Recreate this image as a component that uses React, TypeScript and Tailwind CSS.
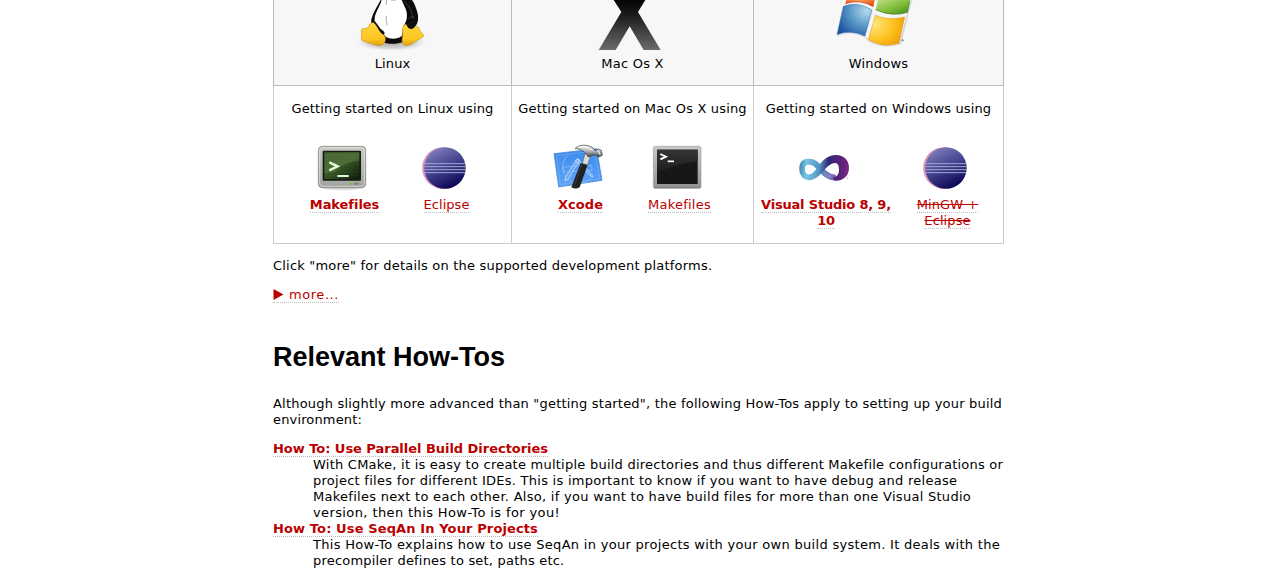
import type { ReactNode } from "react";

function Link({ children, className = "" }: { children: ReactNode; className?: string }) {
  return <a className={`border-b border-dotted border-[#bbb] text-[#b00] ${className}`}>{children}</a>;
}

function Tux() {
  return (
    <svg className="block h-[52px] w-[111px]" viewBox="-9 0 333 156">
      <defs>
        <linearGradient id="foot" x1="0" y1="0" x2="0" y2="1">
          <stop offset="0" stopColor="#ffd53a" />
          <stop offset="0.7" stopColor="#fcc624" />
          <stop offset="1" stopColor="#e0a010" />
        </linearGradient>
        <radialGradient id="footShade">
          <stop offset="0" stopColor="#777" stopOpacity="0.7" />
          <stop offset="0.7" stopColor="#999" stopOpacity="0.35" />
          <stop offset="1" stopColor="#bbb" stopOpacity="0" />
        </radialGradient>
      </defs>
      <ellipse cx="155" cy="127" rx="104" ry="26" fill="url(#footShade)" />
      <path d="M122 0C113 18 99 37 94 58C91 78 103 99 124 126C145 133 171 133 189 126L220 82C236 76 238 50 229 27C224 13 220 5 216 0Z" fill="#0b0b0b" />
      <path d="M125 0C122 14 112 28 106 44C101 61 105 77 116 88C130 96 132 106 139 112C153 119 175 117 185 108C190 99 186 81 194 72C203 56 203 36 194 20L185 0Z" fill="#fff" />
      <path d="M139 0V15M153 0Q160 1 168 0M139 47Q136 60 142 76" fill="none" stroke="#aaa" strokeWidth="3" />
      <path d="M192 4Q215 22 219 56M207 57Q216 45 223 53" fill="none" stroke="#555" strokeWidth="2" />
      <path d="M94 69C104 65 111 75 119 87C125 97 139 108 136 121C134 135 120 140 108 136C92 130 77 127 66 121C61 116 67 105 64 96C62 87 67 86 79 85C88 83 86 72 94 69Z" fill="url(#foot)" stroke="#b88512" strokeWidth="1.5" />
      <path d="M103 70C111 77 121 103 131 104C138 99 131 93 122 87L105 64Z" fill="#0b0b0b" />
      <path d="M193 74C202 69 201 86 213 86C225 88 225 73 233 80C239 86 239 94 248 102C255 109 247 113 235 119C220 128 207 140 195 136C182 132 187 119 188 103C189 91 185 79 193 74Z" fill="url(#foot)" stroke="#b88512" strokeWidth="1.5" />
      <path d="M201 75C205 65 218 63 226 72C227 84 214 91 204 83Z" fill="#111" />
    </svg>
  );
}

function MacX() {
  return (
    <svg className="block h-[52px] w-[111px]" viewBox="-9 0 333 156">
      <defs>
        <linearGradient id="macx" x1="0" y1="0" x2="0" y2="150" gradientUnits="userSpaceOnUse">
          <stop offset="0" stopColor="#050505" />
          <stop offset="0.3" stopColor="#1b1b1b" />
          <stop offset="1" stopColor="#6b6b6b" />
        </linearGradient>
      </defs>
      <path d="M101 0H196L174 36L242 150H191L149 79L107 150H56L124 36Z" fill="url(#macx)" />
    </svg>
  );
}

function WindowsFlag() {
  return (
    <svg className="block h-[52px] w-[111px]" viewBox="-6 0 333 156">
      <defs>
        <radialGradient id="wr" cx="0.5" cy="0" r="0.8">
          <stop offset="0" stopColor="#f8a55a" />
          <stop offset="1" stopColor="#e5490f" />
        </radialGradient>
        <linearGradient id="wg" x1="0" y1="0" x2="1" y2="1">
          <stop offset="0" stopColor="#c2e08b" />
          <stop offset="0.55" stopColor="#7dbb36" />
          <stop offset="1" stopColor="#3c8b18" />
        </linearGradient>
        <radialGradient id="wb" cx="0.85" cy="0.2" r="0.95">
          <stop offset="0" stopColor="#b5d9ec" />
          <stop offset="0.5" stopColor="#5b9aca" />
          <stop offset="1" stopColor="#1d559f" />
        </radialGradient>
        <radialGradient id="wy" cx="0.15" cy="0.3" r="0.95">
          <stop offset="0" stopColor="#ffe680" />
          <stop offset="0.55" stopColor="#fdc421" />
          <stop offset="1" stopColor="#ef9a08" />
        </radialGradient>
      </defs>
      <path d="M68 0H262L249 48L228 133Q180 149 132 125L120 113Q78 91 37 110Z" fill="#d3d4d6" />
      <path d="M63 0H258L245 46L223 131Q180 144 134 122L118 108Q80 92 36 108Z" fill="#f5f5f5" />
      <path d="M64 0H149L145 20Q105 -4 61 11Z" fill="url(#wr)" />
      <path d="M61 11Q105 -4 145 20" fill="none" stroke="#c5380e" strokeWidth="2" />
      <path d="M158 0H255L247 37Q202 52 152 29Z" fill="url(#wg)" />
      <path d="M152 29Q202 52 247 37L254 4" fill="none" stroke="#39781d" strokeWidth="2" />
      <path d="M55 19Q98 3 141 30L120 108Q78 88 36 104Z" fill="url(#wb)" stroke="#3971a8" strokeWidth="1.5" />
      <path d="M151 46Q190 63 239 51L222 130Q174 145 130 119Z" fill="url(#wy)" stroke="#d7941a" strokeWidth="1.5" />
      <circle cx="233" cy="121" r="3" fill="#777" />
    </svg>
  );
}

function GreenTerminal() {
  return (
    <svg className="mr-[5px] block size-[50px]" viewBox="51 27 150 150">
      <defs>
        <linearGradient id="gt" x1="0" y1="0" x2="1" y2="1">
          <stop offset="0" stopColor="#2b4523" />
          <stop offset="0.5" stopColor="#365426" />
          <stop offset="1" stopColor="#0d1c0b" />
        </linearGradient>
        <linearGradient id="gf" x1="0" y1="0" x2="0" y2="1">
          <stop offset="0" stopColor="#c9cac6" />
          <stop offset="1" stopColor="#a2a49f" />
        </linearGradient>
      </defs>
      <ellipse cx="126" cy="158" rx="58" ry="8" fill="#ddd" />
      <rect x="55" y="34" width="142" height="124" rx="12" fill="url(#gf)" stroke="#858783" strokeWidth="2.5" />
      <rect x="59" y="38" width="134" height="116" rx="9" fill="none" stroke="#e7e8e5" strokeWidth="2" />
      <rect x="68" y="47" width="115" height="90" rx="3" fill="#151d13" />
      <rect x="73" y="52" width="105" height="80" fill="url(#gt)" />
      <path d="M73 52H178V77Q130 80 104 110L73 116Z" fill="#6d8c4a" opacity="0.45" />
      <path d="M73 62H178M73 72H178M73 82H178M73 92H178M73 102H178M73 112H178M73 122H178" stroke="#8da66a" strokeWidth="1.2" opacity="0.15" />
      <path d="M88 82L113 94L88 106" fill="none" stroke="#e4f7df" strokeWidth="7" />
      <path d="M112 123H146" stroke="#dcf8d4" strokeWidth="6" />
      <circle cx="154" cy="146" r="3.5" fill="#66cc22" />
      <path d="M162 146H176" stroke="#83857f" strokeWidth="6" />
    </svg>
  );
}

function Eclipse() {
  return (
    <svg className="mr-[5px] block size-[50px]" viewBox="357 27 150 150">
      <defs>
        <linearGradient id="ec" x1="0.25" y1="0" x2="0.75" y2="1">
          <stop offset="0" stopColor="#8080bd" />
          <stop offset="0.5" stopColor="#403f8c" />
          <stop offset="1" stopColor="#06004d" />
        </linearGradient>
      </defs>
      <circle cx="429" cy="99" r="62.5" fill="#d794bb" />
      <ellipse cx="435" cy="99" rx="62" ry="62.5" fill="url(#ec)" />
      <path d="M375 86H496M374 95H497M374 104H497M375 113H496" stroke="#9fa8d5" strokeWidth="3" />
    </svg>
  );
}

function Xcode() {
  return (
    <svg className="mr-[5px] block size-[50px]" viewBox="39 27 150 150">
      <defs>
        <linearGradient id="xb" x1="0" y1="0" x2="0" y2="1">
          <stop offset="0" stopColor="#3f8ced" />
          <stop offset="1" stopColor="#5da3f8" />
        </linearGradient>
        <linearGradient id="xh" x1="0" y1="0" x2="0" y2="1">
          <stop offset="0" stopColor="#f5f5f5" />
          <stop offset="0.5" stopColor="#b5b7ba" />
          <stop offset="1" stopColor="#3c3e42" />
        </linearGradient>
      </defs>
      <path d="M42 56L170 41L186 136L56 156Z" fill="url(#xb)" stroke="#347bd5" strokeWidth="2" />
      <path d="M49 62L165 48L179 131L61 149Z" fill="none" stroke="#a9cffb" strokeWidth="1.2" strokeDasharray="5 2" />
      <path d="M69 96L154 91L156 106L72 111ZM83 61A43 43 0 0 0 150 132" fill="none" stroke="#a3ccfa" strokeWidth="1.7" />
      <path d="M111 72L119 75L84 133L75 138L76 127ZM112 70L155 118L158 126L149 121L106 76" fill="#6babf5" stroke="#d0e6ff" strokeWidth="2.2" />
      <path d="M122 84L143 89L119 157Q107 164 94 157Z" fill="#202124" />
      <path d="M126 87L102 155" stroke="#555" strokeWidth="1.5" />
      <path d="M127 85L135 56L153 58L143 90Z" fill="#dadbdd" stroke="#4b4c4f" strokeWidth="1.5" />
      <path d="M105 41C117 27 142 28 160 39L165 47L175 42L184 46L187 61L176 66L166 60L157 61L145 66L137 55C127 44 115 41 105 41Z" fill="url(#xh)" stroke="#38393b" strokeWidth="2" />
      <path d="M116 36Q141 32 157 46M174 47L181 60" fill="none" stroke="#fff" strokeWidth="3" />
    </svg>
  );
}

function DarkTerminal() {
  return (
    <svg className="mr-[5px] block size-[50px]" viewBox="336 27 150 150">
      <defs>
        <linearGradient id="df" x1="0" y1="0" x2="0" y2="1">
          <stop offset="0" stopColor="#c9c9c9" />
          <stop offset="1" stopColor="#919191" />
        </linearGradient>
        <linearGradient id="ds" x1="0" y1="0" x2="0" y2="1">
          <stop offset="0" stopColor="#353535" />
          <stop offset="1" stopColor="#1c1c1c" />
        </linearGradient>
      </defs>
      <rect x="340" y="34" width="143" height="126" rx="5" fill="url(#df)" stroke="#a2a2a2" strokeWidth="2" />
      <path d="M342 158H481" stroke="#777" strokeWidth="2" />
      <rect x="351" y="44" width="122" height="103" fill="#171717" />
      <path d="M351 44H473V79Q400 87 351 115Z" fill="url(#ds)" />
      <path d="M361 57L378 65L361 73" fill="none" stroke="#fff" strokeWidth="5.5" />
      <path d="M383 79H402" stroke="#fff" strokeWidth="5" />
    </svg>
  );
}

function VisualStudio() {
  return (
    <svg className="mr-[5px] block size-[50px]" viewBox="132 27 150 150">
      <defs>
        <linearGradient id="vl" x1="132" y1="90" x2="280" y2="105" gradientUnits="userSpaceOnUse">
          <stop offset="0" stopColor="#3c83b2" />
          <stop offset="0.16" stopColor="#78c8e2" />
          <stop offset="0.4" stopColor="#579ac7" />
          <stop offset="0.58" stopColor="#2f2b76" />
          <stop offset="0.78" stopColor="#512078" />
          <stop offset="1" stopColor="#792785" />
        </linearGradient>
        <linearGradient id="vx" x1="140" y1="75" x2="265" y2="130" gradientUnits="userSpaceOnUse">
          <stop offset="0" stopColor="#8fd3e7" />
          <stop offset="0.45" stopColor="#4c8cbe" />
          <stop offset="0.7" stopColor="#8981c2" />
          <stop offset="1" stopColor="#562583" />
        </linearGradient>
      </defs>
      <path fill="none" stroke="url(#vl)" strokeWidth="17" d="M193 107C183 120 175 127 161 127C149 127 141 115 141 100C141 86 149 80 162 80C180 80 190 94 201 107C213 120 225 128 241 128" />
      <path fill="none" stroke="url(#vx)" strokeWidth="16" d="M153 80C177 76 190 94 202 107C213 120 225 129 242 128" />
      <path d="M156 135C179 136 194 121 207 106C219 93 229 84 241 84C250 85 252 94 252 104C252 117 247 125 233 128L241 137C266 138 282 121 282 98C282 75 266 60 243 60C218 60 204 76 192 91C180 107 173 119 161 120Z" fill="url(#vl)" />
      <path d="M274 130H279" stroke="#999" strokeWidth="2" />
    </svg>
  );
}

function HeadCell({ icon, children }: { icon: ReactNode; children: ReactNode }) {
  return (
    <div className="flex h-[85px] flex-col items-center bg-[#f7f7f7]">
      {icon}
      <div className="mt-1 whitespace-nowrap">{children}</div>
    </div>
  );
}

function Tool({ icon, width, children }: { icon: ReactNode; width: string; children: ReactNode }) {
  return (
    <div className={`flex flex-col items-center text-center ${width}`}>
      {icon}
      <div className="mt-[3px] whitespace-nowrap">{children}</div>
    </div>
  );
}

export default function App() {
  return (
    <main className="h-[569px] w-[1265px] overflow-hidden bg-white pl-[273px] font-['DejaVu_Sans',sans-serif] text-[13px] leading-4 text-black">
      <div className="grid w-[731px] grid-cols-[238px_242px_249px] divide-x divide-[#bbb] border-r border-l border-[#bbb]">
        <HeadCell icon={<Tux />}><span className="tracking-[0.1px]">Linux</span></HeadCell>
        <HeadCell icon={<MacX />}><span className="tracking-[0.25px]">Mac Os X</span></HeadCell>
        <HeadCell icon={<WindowsFlag />}><span className="tracking-[0.21px]">Windows</span></HeadCell>
      </div>
      <div className="h-px w-[731px] bg-[#bbb]" />
      <div className="grid h-[158px] w-[731px] grid-cols-[238px_242px_249px] divide-x divide-[#ccc] border-r border-b border-l border-[#ccc]">
        <section className="pt-[15px]">
          <p className="text-center tracking-[0.14px] whitespace-nowrap">Getting started on Linux using</p>
          <div className="mt-[27px] flex pl-[19.5px]">
            <Tool icon={<GreenTerminal />} width="w-[102px]"><Link className="font-bold tracking-[-0.05px]">Makefiles</Link></Tool>
            <Tool icon={<Eclipse />} width="w-[102px]"><Link className="tracking-[0.05px]">Eclipse</Link></Tool>
          </div>
        </section>
        <section className="pt-[15px]">
          <p className="text-center tracking-[0.16px] whitespace-nowrap">Getting started on Mac Os X using</p>
          <div className="mt-[27px] flex pl-[19px]">
            <Tool icon={<Xcode />} width="w-[99px]"><Link className="font-bold tracking-[0.04px]">Xcode</Link></Tool>
            <Tool icon={<DarkTerminal />} width="w-[99px]"><Link className="tracking-[0.24px]">Makefiles</Link></Tool>
          </div>
        </section>
        <section className="pt-[15px]">
          <p className="text-center tracking-[0.15px] whitespace-nowrap">Getting started on Windows using</p>
          <div className="mt-[27px] flex gap-[25px] pl-[7px]">
            <Tool icon={<VisualStudio />} width="w-[130px]">
              <Link className="font-bold tracking-[-0.19px]">Visual Studio 8, 9,<br />10</Link>
            </Tool>
            <Tool icon={<Eclipse />} width="w-[63px]">
              <Link className="tracking-[0.1px] line-through">MinGW +<br />Eclipse</Link>
            </Tool>
          </div>
        </section>
      </div>

      <p className="mt-[14px] tracking-[0.2px] whitespace-nowrap">Click "more" for details on the supported development platforms.</p>
      <p className="mt-[13px] whitespace-nowrap">
        <Link className="inline-flex h-4 items-center tracking-[0.56px]">
          <svg className="mr-[5px] block h-[11px] w-[11px]" viewBox="0 0 11 11"><path d="M0.5 0L10.5 5.5L0.5 11Z" fill="#b00" /></svg>
          more...
        </Link>
      </p>

      <h2 className="mt-[37px] font-['Liberation_Sans',Arial,sans-serif] text-[27px] leading-8 font-bold whitespace-nowrap">Relevant How-Tos</h2>

      <p className="mt-[23px] whitespace-nowrap">
        <span className="tracking-[0.204px]">Although slightly more advanced than "getting started", the following How-Tos apply to setting up your build</span><br />
        <span className="tracking-[0.15px]">environment:</span>
      </p>

      <dl className="mt-[13px] whitespace-nowrap">
        <dt><Link className="font-bold tracking-[-0.034px]">How To: Use Parallel Build Directories</Link></dt>
        <dd className="pl-10">
          <span className="tracking-[0.237px]">With CMake, it is easy to create multiple build directories and thus different Makefile configurations or</span><br />
          <span className="tracking-[0.264px]">project files for different IDEs. This is important to know if you want to have debug and release</span><br />
          <span className="tracking-[0.28px]">Makefiles next to each other. Also, if you want to have build files for more than one Visual Studio</span><br />
          <span className="tracking-[0.39px]">version, then this How-To is for you!</span>
        </dd>
        <dt><Link className="font-bold tracking-[0.121px]">How To: Use SeqAn In Your Projects</Link></dt>
        <dd className="pl-10">
          <span className="tracking-[0.299px]">This How-To explains how to use SeqAn in your projects with your own build system. It deals with the</span><br />
          <span className="tracking-[0.2px]">precompiler defines to set, paths etc.</span>
        </dd>
      </dl>
    </main>
  );
}
